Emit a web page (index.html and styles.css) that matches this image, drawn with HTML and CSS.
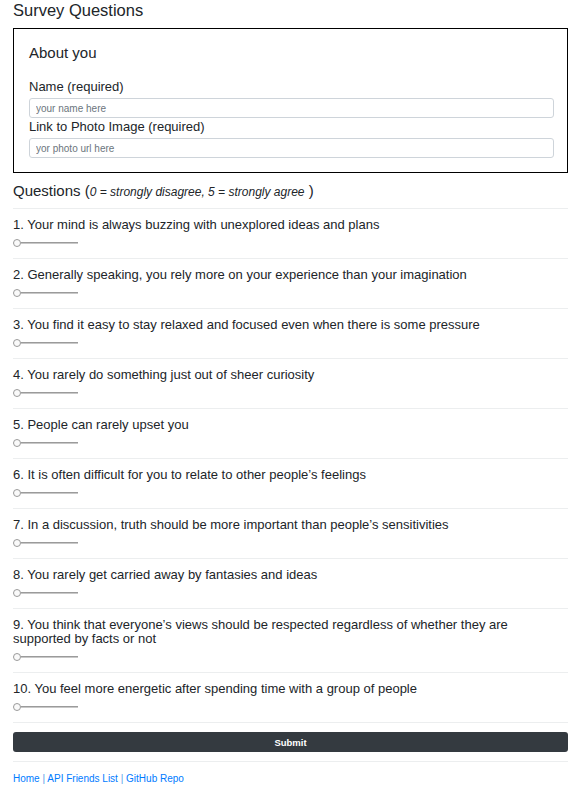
FILE: index.html
```html
<!DOCTYPE html>
<html>
<head>
<meta charset="utf-8">
<link rel="stylesheet" href="styles.css">
</head>
<body>
<div class="container">
  <h1 class="title">Survey Questions</h1>
  <form class="survey">
    <div class="about">
      <h2 class="about-title">About you</h2>
      <label class="lbl">Name (required)</label>
      <input class="field" type="text" placeholder="your name here">
      <label class="lbl lbl-tight">Link to Photo Image (required)</label>
      <input class="field" type="text" placeholder="yor photo url here">
    </div>
    <h2 class="q-heading">Questions (<em class="scale">0 = strongly disagree, 5 = strongly agree</em> )</h2>
    <div class="question"><p class="q-text">1. Your mind is always buzzing with unexplored ideas and plans</p><span class="slider"><span class="thumb"></span><span class="track"></span></span></div>
    <div class="question"><p class="q-text">2. Generally speaking, you rely more on your experience than your imagination</p><span class="slider"><span class="thumb"></span><span class="track"></span></span></div>
    <div class="question"><p class="q-text">3. You find it easy to stay relaxed and focused even when there is some pressure</p><span class="slider"><span class="thumb"></span><span class="track"></span></span></div>
    <div class="question"><p class="q-text">4. You rarely do something just out of sheer curiosity</p><span class="slider"><span class="thumb"></span><span class="track"></span></span></div>
    <div class="question"><p class="q-text">5. People can rarely upset you</p><span class="slider"><span class="thumb"></span><span class="track"></span></span></div>
    <div class="question"><p class="q-text">6. It is often difficult for you to relate to other people’s feelings</p><span class="slider"><span class="thumb"></span><span class="track"></span></span></div>
    <div class="question"><p class="q-text">7. In a discussion, truth should be more important than people’s sensitivities</p><span class="slider"><span class="thumb"></span><span class="track"></span></span></div>
    <div class="question"><p class="q-text">8. You rarely get carried away by fantasies and ideas</p><span class="slider"><span class="thumb"></span><span class="track"></span></span></div>
    <div class="question"><p class="q-text">9. You think that everyone’s views should be respected regardless of whether they are supported by facts or not</p><span class="slider"><span class="thumb"></span><span class="track"></span></span></div>
    <div class="question"><p class="q-text">10. You feel more energetic after spending time with a group of people</p><span class="slider"><span class="thumb"></span><span class="track"></span></span></div>
    <div class="submit-row"><button type="button" class="submit">Submit</button></div>
  </form>
  <footer class="footer">
    <a href="#">Home</a> <span class="sep">|</span> <a href="#">API Friends List</a> <span class="sep">|</span> <a href="#">GitHub Repo</a>
  </footer>
</div>
</body>
</html>
```
FILE: styles.css
```css
* { box-sizing: border-box; }
body {
  margin: 0;
  font-family: "Liberation Sans", Arial, sans-serif;
  color: #212529;
  background: #fff;
}
.container {
  padding: 0 19px 0 13px;
}
.title {
  margin: 0;
  padding-top: 1px;
  font-size: 16.5px;
  font-weight: 500;
  line-height: 19px;
  height: 28px;
}
.about {
  border: 1px solid #000;
  padding: 15px 13px 14px 15px;
  display: flex;
  flex-direction: column;
}
.about-title {
  margin: 0 0 17px;
  font-size: 15px;
  font-weight: 500;
  line-height: 18px;
}
.lbl {
  font-size: 13px;
  line-height: 15px;
  margin-bottom: 4px;
}
.lbl-tight { margin-top: 1px; margin-bottom: 4px; }
.field {
  height: 20px;
  border: 1px solid #ced4da;
  border-radius: 3px;
  padding: 0 6px;
  font-family: inherit;
  font-size: 10px;
  color: #495057;
  margin: 0;
}
.field::placeholder { color: #6c757d; }
.q-heading {
  margin: 0;
  padding-top: 9px;
  padding-bottom: 7px;
  font-size: 15px;
  font-weight: 500;
  line-height: 18px;
  border-bottom: 1px solid #eceeef;
}
.scale {
  font-size: 12px;
  font-weight: 400;
}
.question {
  padding: 9px 0 8px;
  border-bottom: 1px solid #eceeef;
  display: flex;
  flex-direction: column;
}
.q-text {
  margin: 0 0 3px;
  font-size: 13px;
  line-height: 14px;
}
.slider {
  display: flex;
  align-items: center;
  width: 65px;
  height: 15px;
}
.thumb {
  width: 8px;
  height: 8px;
  border-radius: 50%;
  border: 1px solid #9a9a9a;
  background: #fafafa;
  flex: none;
}
.track {
  flex: 1;
  height: 2px;
  background: #9b9b9b;
  border-bottom: 1px solid #c8c8c8;
}
.submit-row {
  padding: 9px 0 9px;
  border-bottom: 1px solid #eceeef;
}
.submit {
  display: block;
  width: 100%;
  height: 20px;
  background: #343a40;
  color: #fff;
  border: 0;
  border-radius: 3px;
  font-family: inherit;
  font-size: 9.5px;
  font-weight: 700;
}
.footer {
  padding-top: 11px;
  font-size: 10px;
  line-height: 12px;
  color: #007bff;
}
.footer a { color: #007bff; text-decoration: none; }
.sep { color: #5a9be8; }
```
